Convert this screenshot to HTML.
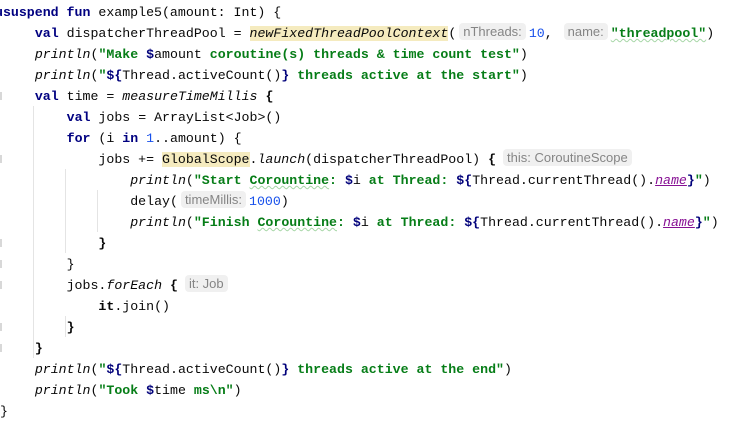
<!DOCTYPE html>
<html><head><meta charset="utf-8"><style>
html,body{margin:0;padding:0;background:#fff;width:736px;height:425px;overflow:hidden;position:relative}
.l{position:absolute;left:3px;height:21px;line-height:21px;white-space:pre;font-family:"Liberation Mono",monospace;font-size:13.25px;color:#080808}
.k{color:#000080;font-weight:bold}
.s{color:#067d17;font-weight:bold}
.n{color:#1750eb}
.i{font-style:italic}
.d{color:#00007a;font-weight:bold}
.hl{background:#f5ebbf}
.pr{color:#871094;font-style:italic;text-decoration:underline}
.w{text-decoration:underline wavy #a6d6a6;text-decoration-thickness:1px}
.h{display:inline-block;font-family:"Liberation Sans",sans-serif;font-size:13px;color:#858585;background:#f0f0f0;border-radius:4px;padding:0 4px;line-height:17px;margin:0 3px;vertical-align:1px;font-weight:normal;font-style:normal}
.g{position:absolute;width:1px;background:#e4e4e4}
.f{position:absolute;left:0;width:2px;height:8px;background:#d8d8d8}
</style></head><body>
<div class="g" style="left:33px;top:106px;height:252px"></div>
<div class="g" style="left:65px;top:169px;height:84px"></div>
<div class="g" style="left:97px;top:190px;height:42px"></div>
<div class="g" style="left:65px;top:316px;height:21px"></div>
<div class="f" style="top:92px"></div>
<div class="f" style="top:155px"></div>
<div class="f" style="top:239px"></div>
<div class="f" style="top:260px"></div>
<div class="f" style="top:281px"></div>
<div class="f" style="top:323px"></div>
<div class="f" style="top:344px"></div>

<div class="l" style="top:2px;left:-5px"><span class="k">ususpend fun</span> example5(amount: Int) {</div>
<div class="l" style="top:23px">    <span class="k">val</span> dispatcherThreadPool = <span class="i hl">newFixedThreadPoolContext</span>(<span class="h">nThreads:</span><span class="n">10</span>, <span class="h">name:</span><span class="s w">"threadpool"</span>)</div>
<div class="l" style="top:44px">    <span class="i">println</span>(<span class="s">"Make </span><span class="d">$</span>amount<span class="s"> coroutine(s) threads &amp; time count test"</span>)</div>
<div class="l" style="top:65px">    <span class="i">println</span>(<span class="s">"</span><span class="d">${</span>Thread.activeCount()<span class="d">}</span><span class="s"> threads active at the start"</span>)</div>
<div class="l" style="top:86px">    <span class="k">val</span> time = <span class="i">measureTimeMillis</span> <b>{</b></div>
<div class="l" style="top:107px">        <span class="k">val</span> jobs = ArrayList&lt;Job&gt;()</div>
<div class="l" style="top:128px">        <span class="k">for</span> (i <span class="k">in</span> <span class="n">1</span>..amount) {</div>
<div class="l" style="top:149px">            jobs += <span class="hl">GlobalScope</span>.<span class="i">launch</span>(dispatcherThreadPool) <b>{</b><span class="h" style="margin-left:7px">this: CoroutineScope</span></div>
<div class="l" style="top:170px">                <span class="i">println</span>(<span class="s">"Start <span class="w">Corountine</span>: </span><span class="d">$</span>i<span class="s"> at Thread: </span><span class="d">${</span>Thread.currentThread().<span class="pr">name</span><span class="d">}</span><span class="s">"</span>)</div>
<div class="l" style="top:191px">                delay(<span class="h">timeMillis:</span><span class="n">1000</span>)</div>
<div class="l" style="top:212px">                <span class="i">println</span>(<span class="s">"Finish <span class="w">Corountine</span>: </span><span class="d">$</span>i<span class="s"> at Thread: </span><span class="d">${</span>Thread.currentThread().<span class="pr">name</span><span class="d">}</span><span class="s">"</span>)</div>
<div class="l" style="top:233px">            <b>}</b></div>
<div class="l" style="top:254px">        }</div>
<div class="l" style="top:275px">        jobs.<span class="i">forEach</span> <b>{</b><span class="h" style="margin-left:7px">it: Job</span></div>
<div class="l" style="top:296px">            <b>it</b>.join()</div>
<div class="l" style="top:317px">        <b>}</b></div>
<div class="l" style="top:338px">    <b>}</b></div>
<div class="l" style="top:359px">    <span class="i">println</span>(<span class="s">"</span><span class="d">${</span>Thread.activeCount()<span class="d">}</span><span class="s"> threads active at the end"</span>)</div>
<div class="l" style="top:380px">    <span class="i">println</span>(<span class="s">"Took </span><span class="d">$</span>time<span class="s"> ms\n"</span>)</div>
<div class="l" style="top:401px;left:0px">}</div>
</body></html>
